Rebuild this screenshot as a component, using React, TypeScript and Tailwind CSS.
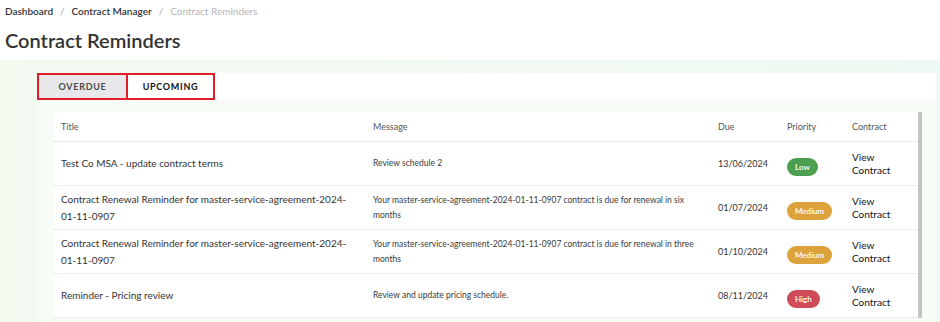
import React from "react";

type Priority = "Low" | "Medium" | "High";

type Reminder = {
  title: string;
  message: string;
  due: string;
  priority: Priority;
};

const reminders: Reminder[] = [
  {
    title: "Test Co MSA - update contract terms",
    message: "Review schedule 2",
    due: "13/06/2024",
    priority: "Low",
  },
  {
    title: "Contract Renewal Reminder for master-service-agreement-2024-01-11-0907",
    message: "Your master-service-agreement-2024-01-11-0907 contract is due for renewal in six months",
    due: "01/07/2024",
    priority: "Medium",
  },
  {
    title: "Contract Renewal Reminder for master-service-agreement-2024-01-11-0907",
    message: "Your master-service-agreement-2024-01-11-0907 contract is due for renewal in three months",
    due: "01/10/2024",
    priority: "Medium",
  },
  {
    title: "Reminder - Pricing review",
    message: "Review and update pricing schedule.",
    due: "08/11/2024",
    priority: "High",
  },
];

const badge: Record<Priority, string> = {
  Low: "bg-[#4c9f50]",
  Medium: "bg-[#dca33d]",
  High: "bg-[#d04b5a]",
};

const cols = "grid grid-cols-[312px_345px_69px_65px_1fr] px-2";

export default function App() {
  return (
    <main className="w-[940px] h-[322px] overflow-hidden bg-white font-['Lato',sans-serif] text-[#333]">
      <nav className="px-[5px] pt-[4px] text-[10px] flex gap-[7px] text-[#333]">
        <span className="font-semibold">Dashboard</span>
        <span className="text-[#aaa]">/</span>
        <span className="font-semibold">Contract Manager</span>
        <span className="text-[#aaa]">/</span>
        <span className="text-[#b5b5b5]">Contract Reminders</span>
      </nav>
      <h1 className="px-[5px] mt-[8px] text-[20px] font-semibold leading-[26px] text-[#333]">
        Contract Reminders
      </h1>

      <section className="mt-[7px] h-[300px] bg-gradient-to-r from-[#f3faf0] to-[#eff9f3] pl-[37px] pr-[4px] pt-[13px]">
        <div className="h-full bg-[#f8fcf6]">
          <div className="flex h-[27px] bg-white">
            <button className="w-[91px] border-2 border-[#e11d2b] bg-[#e8e8eb] text-[9px] font-bold tracking-[0.08em] text-[#4a4a4a]">
              OVERDUE
            </button>
            <button className="w-[89px] -ml-[2px] border-2 border-[#e11d2b] bg-white text-[9px] font-bold tracking-[0.08em] text-[#111]">
              UPCOMING
            </button>
          </div>

          <div className="mt-[12px] ml-[16px] mr-[14px] flex">
            <div className="flex-1 bg-white rounded-tl-[2px]">
              <div className={`${cols} h-[30px] items-center border-b border-[#e8e8e8] text-[9px] text-[#555]`}>
                <span>Title</span>
                <span>Message</span>
                <span>Due</span>
                <span>Priority</span>
                <span>Contract</span>
              </div>
              {reminders.map((r, i) => (
                <div
                  key={i}
                  className={`${cols} h-[44px] items-center border-b border-[#ececec]`}
                >
                  <span className="pr-4 text-[10px] leading-[17px] text-[#333]">
                    {r.title}
                  </span>
                  <span className="pr-3 text-[8.5px] leading-[15px] text-[#3a3a3a]">
                    {r.message}
                  </span>
                  <span className="text-[9px] text-[#333]">{r.due}</span>
                  <span>
                    <span
                      className={`${badge[r.priority]} inline-flex h-[18px] items-center rounded-full px-[8px] text-[8px] font-semibold text-white`}
                    >
                      {r.priority}
                    </span>
                  </span>
                  <span className="text-[10px] leading-[13px] text-[#111]">
                    View
                    <br />
                    Contract
                  </span>
                </div>
              ))}
            </div>
            <div className="w-[4px] bg-[#c4c4c4]" />
          </div>
        </div>
      </section>
    </main>
  );
}
